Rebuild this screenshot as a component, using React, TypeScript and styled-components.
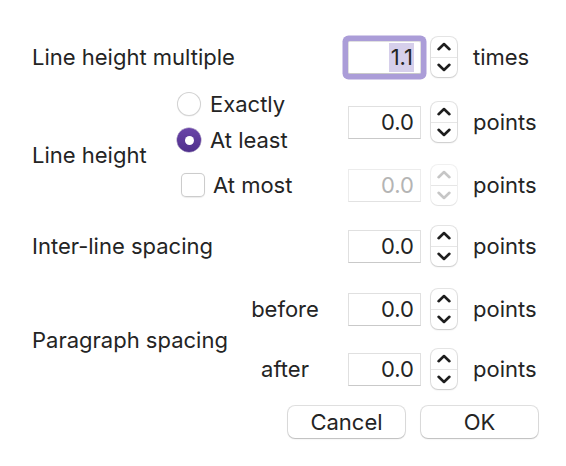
import styled, { createGlobalStyle } from 'styled-components';

const GlobalStyle = createGlobalStyle`
  html, body {
    margin: 0;
    padding: 0;
    background: #ffffff;
  }
  body {
    font-family: Inter, "Noto Sans", "Liberation Sans", sans-serif;
    color: #242424;
    -webkit-font-smoothing: antialiased;
  }
`;

const Dialog = styled.div`
  width: 566px;
  height: 466px;
  box-sizing: border-box;
  padding: 28px 28px 0 32px;
  display: flex;
  flex-direction: column;
  font-size: 22px;
`;

const Form = styled.div`
  display: grid;
  grid-template-columns: 145px 171px 73px 36px 1fr;
  grid-template-rows: 58px 36px 36px 54px 68px 58px 62px;
  align-items: center;
`;

const SectionLabel = styled.div<{ $row: string; $cols?: string; $shift?: number }>`
  grid-column: ${(p) => p.$cols ?? '1'};
  grid-row: ${(p) => p.$row};
  padding-top: ${(p) => p.$shift ?? 0}px;
  white-space: nowrap;
`;

const Choice = styled.label<{ $row: string; $indent?: number }>`
  grid-column: 2;
  grid-row: ${(p) => p.$row};
  display: flex;
  align-items: center;
  gap: ${(p) => (p.$indent ? 8 : 9)}px;
  margin-left: ${(p) => p.$indent ?? 0}px;
  white-space: nowrap;
`;

const Radio = styled.span<{ $checked?: boolean }>`
  width: 24px;
  height: 24px;
  box-sizing: border-box;
  border-radius: 50%;
  display: flex;
  align-items: center;
  justify-content: center;
  background: ${(p) => (p.$checked ? 'linear-gradient(#6a45a8, #4f2f8c)' : '#ffffff')};
  box-shadow: ${(p) =>
    p.$checked
      ? '0 0 0 0.5px rgba(60,30,110,0.5)'
      : 'inset 0 0 0 1px rgba(0,0,0,0.18), 0 0.5px 1px rgba(0,0,0,0.08)'};

  &::after {
    content: '';
    display: ${(p) => (p.$checked ? 'block' : 'none')};
    width: 9px;
    height: 9px;
    border-radius: 50%;
    background: #ffffff;
  }
`;

const Checkbox = styled.span`
  width: 24px;
  height: 24px;
  box-sizing: border-box;
  border-radius: 5px;
  background: #ffffff;
  box-shadow: inset 0 0 0 1px rgba(0, 0, 0, 0.2), 0 0.5px 1px rgba(0, 0, 0, 0.08);
`;

const SubLabel = styled.div<{ $row: string }>`
  grid-column: 2;
  grid-row: ${(p) => p.$row};
  justify-self: end;
  width: 70px;
  margin-right: 28px;
  text-align: center;
`;

const Field = styled.div<{ $row: string; $disabled?: boolean; $focused?: boolean }>`
  grid-column: 3;
  grid-row: ${(p) => p.$row};
  height: 33px;
  box-sizing: border-box;
  background: #ffffff;
  border: 1px solid ${(p) => (p.$disabled ? '#ececec' : '#e0e0e0')};
  border-bottom-color: ${(p) => (p.$disabled ? '#e2e2e2' : '#c9c9c9')};
  border-radius: ${(p) => (p.$focused ? '2px' : '0')};
  box-shadow: ${(p) => (p.$focused ? '0 0 0 5.5px #ab9dd8' : 'none')};
  display: flex;
  align-items: center;
  justify-content: flex-end;
  padding-right: 6px;
  color: ${(p) => (p.$disabled ? '#b4b4b4' : '#242424')};
`;

const Selected = styled.span`
  background: #d6cfeb;
  padding: 1px 1px 1px 2px;
  line-height: 27px;
`;

const StepperBox = styled.div<{ $row: string; $disabled?: boolean }>`
  grid-column: 4;
  grid-row: ${(p) => p.$row};
  justify-self: end;
  width: 26px;
  height: 40px;
  border-radius: 7px;
  background: #ffffff;
  box-shadow: ${(p) =>
    p.$disabled
      ? '0 0 0 1px rgba(0,0,0,0.06), 0 1px 1px rgba(0,0,0,0.06)'
      : '0 0 0 1px rgba(0,0,0,0.1), 0 1px 2px rgba(0,0,0,0.12)'};
  display: flex;
  flex-direction: column;
  color: ${(p) => (p.$disabled ? '#c6c6c6' : '#1e1e1e')};
`;

const StepHalf = styled.div<{ $top?: boolean }>`
  flex: 1;
  display: flex;
  align-items: center;
  justify-content: center;
  border-bottom: ${(p) => (p.$top ? '1px solid #e6e6e6' : 'none')};
`;

const Unit = styled.div<{ $row: string }>`
  grid-column: 5;
  grid-row: ${(p) => p.$row};
  padding-left: 16px;
  white-space: nowrap;
`;

const ButtonRow = styled.div`
  display: flex;
  justify-content: flex-end;
  gap: 16px;
  margin-top: 6px;
`;

const Button = styled.button`
  width: 117px;
  height: 32px;
  border: none;
  border-radius: 7px;
  background: #ffffff;
  box-shadow: 0 0 0 1px rgba(0, 0, 0, 0.12), 0 1px 1.5px rgba(0, 0, 0, 0.16);
  font: inherit;
  font-size: 22px;
  color: #242424;
  padding: 0;
`;

const Chevron = ({ up }: { up?: boolean }) => (
  <svg width="14" height="9" viewBox="0 0 14 9">
    <path
      d={up ? 'M1.6 7.2 L7 2 L12.4 7.2' : 'M1.6 1.8 L7 7 L12.4 1.8'}
      fill="none"
      stroke="currentColor"
      strokeWidth="2.6"
      strokeLinecap="round"
      strokeLinejoin="round"
    />
  </svg>
);

const Stepper = ({ row, disabled }: { row: string; disabled?: boolean }) => (
  <StepperBox $row={row} $disabled={disabled}>
    <StepHalf $top>
      <Chevron up />
    </StepHalf>
    <StepHalf>
      <Chevron />
    </StepHalf>
  </StepperBox>
);

export default function App() {
  return (
    <>
      <GlobalStyle />
      <Dialog>
        <Form>
          <SectionLabel $row="1" $cols="1 / 3">
            Line height multiple
          </SectionLabel>
          <Field $row="1" $focused>
            <Selected>1.1</Selected>
          </Field>
          <Stepper row="1" />
          <Unit $row="1">times</Unit>

          <SectionLabel $row="2 / 5" $shift={12}>
            Line height
          </SectionLabel>
          <Choice $row="2">
            <Radio />
            Exactly
          </Choice>
          <Choice $row="3">
            <Radio $checked />
            At least
          </Choice>
          <Field $row="2 / 4">0.0</Field>
          <Stepper row="2 / 4" />
          <Unit $row="2 / 4">points</Unit>

          <Choice $row="4" $indent={4}>
            <Checkbox />
            At most
          </Choice>
          <Field $row="4" $disabled>
            0.0
          </Field>
          <Stepper row="4" disabled />
          <Unit $row="4">points</Unit>

          <SectionLabel $row="5" $cols="1 / 3">
            Inter-line spacing
          </SectionLabel>
          <Field $row="5">0.0</Field>
          <Stepper row="5" />
          <Unit $row="5">points</Unit>

          <SectionLabel $row="6 / 8">Paragraph spacing</SectionLabel>
          <SubLabel $row="6">before</SubLabel>
          <Field $row="6">0.0</Field>
          <Stepper row="6" />
          <Unit $row="6">points</Unit>

          <SubLabel $row="7">after</SubLabel>
          <Field $row="7">0.0</Field>
          <Stepper row="7" />
          <Unit $row="7">points</Unit>
        </Form>
        <ButtonRow>
          <Button>Cancel</Button>
          <Button>OK</Button>
        </ButtonRow>
      </Dialog>
    </>
  );
}
